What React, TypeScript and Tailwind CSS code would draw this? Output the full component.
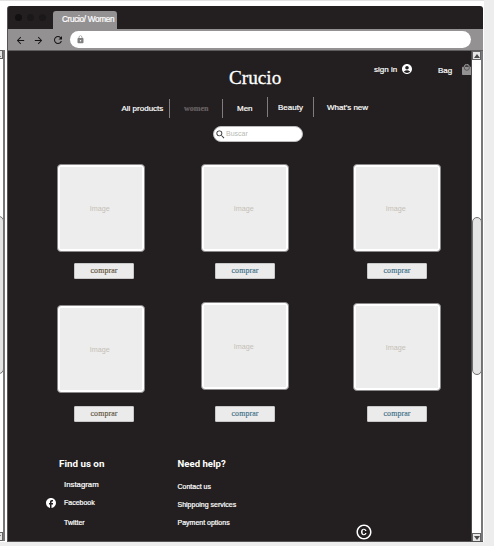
import React from "react";
import { MdArrowBack, MdArrowForward, MdRefresh, MdLock, MdAccountCircle, MdSearch, MdFacebook, MdCopyright } from "react-icons/md";

const SANS = "font-['Liberation_Sans',Arial,sans-serif]";
const SERIF = "font-['Liberation_Serif',serif]";
const CRISP = "[-webkit-text-stroke:0.2px_currentColor]";

function Scrollbar({ side }: { side: "left" | "right" }) {
  const left = side === "left";
  return (
    <div className={`flex h-[491px] w-[12px] shrink-0 flex-col border-r-2 border-[#777779] bg-white ${left ? "" : "border-l border-l-[#4d4c4d]"}`}>
      <div className="flex h-[9px] items-center justify-center border border-[#656365] bg-[#e6e6e6]">
        <svg width="6" height="4" viewBox="0 0 6 4"><path d="M0 4L3 0L6 4Z" fill="#4b494a" /></svg>
      </div>
      <div className="mt-[157px] -mr-[1px] h-[158px] rounded-[5px] border border-[#707070] bg-[#e4e4e4]" />
      <div className="mt-auto flex h-[9px] items-center justify-center border border-[#656365] bg-[#e6e6e6]">
        <svg width="6" height="4" viewBox="0 0 6 4"><path d="M0 0L3 4L6 0Z" fill="#4b494a" /></svg>
      </div>
    </div>
  );
}

function Product({ gap, second, gap2, tone }: { gap: string; second: string; gap2: string; tone: string }) {
  const image = "flex h-[88px] w-[87.5px] items-center justify-center rounded-[4px] border border-[#8b898a] bg-white p-[2px]";
  const fill = `flex h-full w-full items-center justify-center bg-[#ededed] pt-[2px] pr-[2px] text-[7.2px] text-[#c5bfb6] ${SANS}`;
  const button = `flex h-[16px] w-[60px] items-center justify-center rounded-[1px] border border-[#c8c8c8] bg-[#ebebeb] pb-px text-[7.9px] tracking-[0.1px] [-webkit-text-stroke:0.15px_currentColor] ${SERIF} ${tone}`;
  return (
    <div className="flex w-[88px] flex-col items-start">
      <div className={image}><div className={fill}>Image</div></div>
      <button className={`${button} ${gap}`}>comprar</button>
      <div className={`${image} ${second}`}><div className={fill}>Image</div></div>
      <button className={`${button} ${gap2}`}>comprar</button>
    </div>
  );
}

export default function App() {
  return (
    <div className={`flex h-[546px] w-[494px] overflow-hidden bg-[#ededed] text-white ${SANS}`}>
      <div className="flex h-[542px] w-[484px] shrink-0 overflow-hidden border-t border-[#e2e2e2] bg-white">
        <div className="flex w-[5px] shrink-0 justify-end overflow-hidden pt-[49px]">
          <Scrollbar side="left" />
        </div>
        <div className="mt-[5px] ml-[2px] flex h-[536px] w-[476px] shrink-0 flex-col overflow-hidden rounded-t-[3px] border-b border-l border-[#555354] bg-[#231f20]">
          <div className="flex h-[23px] shrink-0 items-end">
            <div className="mb-[8px] ml-[7px] flex gap-[5px]">
              <i className="size-[7px] rounded-full bg-[#121011]" />
              <i className="size-[7px] rounded-full bg-[#1b1819]" />
              <i className="size-[7px] rounded-full bg-[#1b1819]" />
            </div>
            <div className={`ml-[7px] flex h-[18px] w-[64px] items-center rounded-t-[3px] bg-[#949192] pl-[9px] text-[8.2px] tracking-[-0.3px] whitespace-nowrap ${CRISP}`}>Crucio/ Women</div>
          </div>
          <div className="flex h-[22px] shrink-0 items-center border-b border-[#605d5e] bg-[#949192] text-[#171415]">
            <MdArrowBack size={11} className="mt-px ml-[7px]" />
            <MdArrowForward size={11} className="mt-px ml-[7px]" />
            <MdRefresh size={12} className="mt-px ml-[8px]" />
            <div className="ml-[6px] flex h-[17px] w-[401px] items-center rounded-full bg-white pl-[6px] text-[#828080]"><MdLock size={9} /></div>
          </div>
          <div className="flex h-[491px]">
            <main className="flex w-[463px] shrink-0 flex-col">
              <header className="flex h-[46px] items-start whitespace-nowrap">
                <h1 className={`mt-[15px] ml-[221px] w-[54px] text-[19.2px] leading-[24px] [-webkit-text-stroke:0.3px_currentColor] ${SERIF}`}>Crucio</h1>
                <span className={`mt-[13px] ml-[91px] w-[25px] text-[8px] leading-[12px] ${CRISP}`}>sign in</span>
                <MdAccountCircle size={12} className="mt-[12px] ml-[2px]" />
                <span className={`mt-[14px] ml-[25px] w-[15px] text-[8px] leading-[12px] ${CRISP}`}>Bag</span>
                <svg width="9" height="12" viewBox="0 0 9 12" className="mt-[13px] ml-[9px] shrink-0">
                  <path d="M0 3.6Q0 2.8 .8 2.8H9V11H.8Q0 11 0 10.2Z" fill="#949192" />
                  <circle cx="4.8" cy="3.8" r="2.5" fill="none" stroke="#5b5859" strokeWidth="1" />
                  <path d="M2.3 2.8A2.5 2.5 0 0 1 7.3 2.8" fill="none" stroke="#949192" strokeWidth="1" />
                </svg>
              </header>
              <nav className={`flex h-[21px] items-start text-[8px] leading-[12px] whitespace-nowrap ${CRISP}`}>
                <a className="mt-[6px] ml-[113.5px] w-[47.5px]">All products</a>
                <i className="mt-[2px] h-[19px] w-px bg-[#807d7e]" />
                <a className={`mt-[6px] ml-[14px] w-[38px] font-bold text-[#686263] ${SERIF}`}>women</a>
                <i className="mt-[2px] h-[19px] w-px bg-[#807d7e]" />
                <a className="mt-[6px] ml-[14px] w-[30px]">Men</a>
                <i className="h-[20px] w-px bg-[#807d7e]" />
                <a className="mt-[5px] ml-[10px] w-[35px]">Beauty</a>
                <i className="h-[20px] w-px bg-[#807d7e]" />
                <a className="mt-[5px] ml-[13px]">What's new</a>
              </nav>
              <div className="mt-[8px] ml-[205px] flex h-[16px] w-[90px] items-center rounded-full border border-[#bbb] bg-white text-[#333]">
                <MdSearch size={11} className="ml-px" />
                <span className="text-[7px] text-[#b7b9b2]">Buscar</span>
              </div>
              <section className="mt-[22px] ml-[49px] flex h-[259px]">
                <Product gap="mt-[11px] ml-[17px]" second="mt-[26px]" gap2="mt-[13px] ml-[17px]" tone="text-[#5f5440]" />
                <div className="ml-[56px]"><Product gap="mt-[11px] ml-[14px]" second="mt-[23px]" gap2="mt-[16px] ml-[14px]" tone="text-[#3f6f88]" /></div>
                <div className="ml-[64px]"><Product gap="mt-[11px] ml-[14px]" second="mt-[24px]" gap2="mt-[15px] ml-[14px]" tone="text-[#3f6f88]" /></div>
              </section>
              <footer className="mt-[34px] flex items-start text-[7px] whitespace-nowrap">
                <div className="ml-[38px] w-[131.5px]">
                  <h2 className="ml-[13px] pt-px font-['Roboto',sans-serif] text-[9.8px] leading-[12px] font-bold">Find us on</h2>
                  <div className={`mt-[10px] ml-[18px] text-[7.8px] leading-[10px] ${CRISP}`}>Instagram</div>
                  <div className={`mt-[7px] flex h-[12px] items-center ${CRISP}`}><MdFacebook size={12} className="-ml-px" /><span className="ml-[7px]">Facebook</span></div>
                  <div className={`mt-[9px] ml-[18px] leading-[10px] ${CRISP}`}>Twitter</div>
                </div>
                <div className="w-[177px]">
                  <h2 className="pt-px font-['Roboto',sans-serif] text-[9.6px] leading-[12px] font-bold">Need help?</h2>
                  <div className={`mt-[12px] leading-[10px] ${CRISP}`}>Contact us</div>
                  <div className={`mt-[8px] leading-[10px] ${CRISP}`}>Shippoing services</div>
                  <div className={`mt-[8px] leading-[10px] ${CRISP}`}>Payment options</div>
                </div>
                <MdCopyright size={18} className="mt-[66px]" />
              </footer>
            </main>
            <Scrollbar side="right" />
          </div>
        </div>
      </div>
    </div>
  );
}
